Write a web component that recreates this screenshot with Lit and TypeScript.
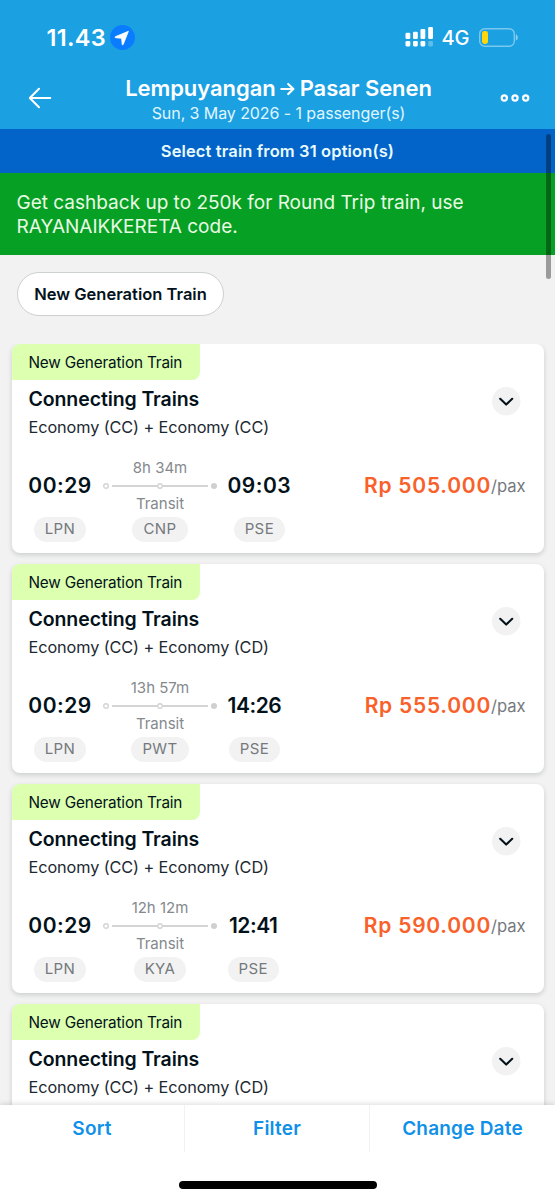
import { LitElement, html, css, nothing } from "lit";
import { customElement, property } from "lit/decorators.js";
import { classMap } from "lit/directives/class-map.js";

interface Leg {
  depart: string;
  arrive: string;
  duration: string;
  via: string;
  price: string;
}

interface Trip {
  classes: string;
  leg?: Leg;
}

const TRIPS: Trip[] = [
  { classes: "Economy (CC) + Economy (CC)", leg: { depart: "00:29", arrive: "09:03", duration: "8h 34m", via: "CNP", price: "Rp 505.000" } },
  { classes: "Economy (CC) + Economy (CD)", leg: { depart: "00:29", arrive: "14:26", duration: "13h 57m", via: "PWT", price: "Rp 555.000" } },
  { classes: "Economy (CC) + Economy (CD)", leg: { depart: "00:29", arrive: "12:41", duration: "12h 12m", via: "KYA", price: "Rp 590.000" } },
  { classes: "Economy (CC) + Economy (CD)" },
];

@customElement("train-card")
class TrainCard extends LitElement {
  @property({ attribute: false }) trip!: Trip;

  static styles = css`
    :host {
      display: block;
      box-sizing: border-box;
      height: 209px;
      border-radius: 8px;
      background: #fff;
      box-shadow: 0 2px 5px rgba(3, 18, 26, 0.16);
      color: #03121a;
    }
    .tag {
      box-sizing: border-box;
      width: 188px;
      height: 36px;
      padding-left: 17px;
      border-radius: 8px 0 8px 0;
      background: #dcffb0;
      font-size: 15.3px;
      letter-spacing: -0.16px;
      line-height: 37px;
      white-space: nowrap;
    }
    .head {
      display: flex;
      justify-content: space-between;
      align-items: flex-start;
      height: 71px;
      padding: 7px 23px 0 17px;
    }
    h2 {
      margin: 0;
      font-size: 19.5px;
      font-weight: 600;
      line-height: 25px;
      letter-spacing: -0.1px;
    }
    .classes {
      margin-top: 3px;
      font-size: 16.3px;
      line-height: 24px;
      letter-spacing: -0.1px;
      color: #1c2930;
    }
    .expand {
      width: 28.5px;
      height: 28.5px;
    }
    .trip {
      display: flex;
      align-items: flex-start;
      padding: 0 18px 0 17px;
    }
    .stop {
      display: flex;
      flex-direction: column;
      align-items: center;
      gap: 3px;
    }
    .from {
      width: 63px;
    }
    .route {
      width: 114px;
      margin: 0 10.5px 0 11.5px;
    }
    .time {
      font-size: 21px;
      font-weight: 600;
      line-height: 56px;
      letter-spacing: 0.5px;
    }
    .narrow {
      letter-spacing: -0.45px;
    }
    .leg {
      display: grid;
      grid-template-rows: 20px 16px 20px;
      justify-items: center;
      font-size: 15px;
      line-height: 20px;
      color: #84898d;
    }
    .line {
      width: 114px;
      height: 16px;
    }
    .code {
      padding: 0 11px;
      border-radius: 12.5px;
      background: #f2f2f2;
      color: #75797d;
      font-size: 15px;
      letter-spacing: 0.4px;
      line-height: 24.5px;
    }
    .price {
      margin-left: auto;
      display: flex;
      line-height: 56px;
      white-space: nowrap;
    }
    .amount {
      font-size: 21px;
      font-weight: 600;
      letter-spacing: 0.75px;
      color: #f9612b;
    }
    .pax {
      font-size: 16.6px;
      letter-spacing: -0.05px;
      color: #75797d;
    }
  `;

  private renderLeg(l: Leg) {
    return html`
      <div class="trip">
        <div class="stop from">
          <span class="time">${l.depart}</span>
          <span class="code">LPN</span>
        </div>
        <div class="stop route">
          <div class="leg">
            <span>${l.duration}</span>
            <svg class="line" viewBox="0 0 114 16" fill="none" stroke="#d3d4d5">
              <path d="M9 8H54M60 8H105" stroke-width="1.8" />
              <circle cx="3" cy="8" r="2.3" stroke-width="1.4" />
              <circle cx="57" cy="8" r="2.3" stroke-width="1.4" />
              <circle cx="111" cy="8" r="3" fill="#cfd0d1" stroke="none" />
            </svg>
            <span>Transit</span>
          </div>
          <span class="code">${l.via}</span>
        </div>
        <div class="stop">
          <span class=${classMap({ time: true, narrow: l.arrive.startsWith("1") })}>${l.arrive}</span>
          <span class="code">PSE</span>
        </div>
        <div class="price">
          <span class="amount">${l.price}</span><span class="pax">/pax</span>
        </div>
      </div>
    `;
  }

  render() {
    const t = this.trip;
    return html`
      <div class="tag">New Generation Train</div>
      <div class="head">
        <div>
          <h2>Connecting Trains</h2>
          <div class="classes">${t.classes}</div>
        </div>
        <svg class="expand" viewBox="0 0 28.5 28.5" fill="none">
          <circle cx="14.25" cy="14.25" r="14.25" fill="#f2f2f2" />
          <path d="M8.2 11.8 14.2 17.6 20.2 11.8" stroke="#03121a" stroke-width="2.1" stroke-linecap="round" stroke-linejoin="round" />
        </svg>
      </div>
      ${t.leg ? this.renderLeg(t.leg) : nothing}
    `;
  }
}

@customElement("app-root")
class AppRoot extends LitElement {
  static styles = css`
    :host {
      display: flex;
      flex-direction: column;
      position: relative;
      width: 555px;
      height: 1200px;
      overflow: hidden;
      background: #f2f2f2;
      font-family: Inter, "Liberation Sans", sans-serif;
      color: #03121a;
    }
    header {
      flex: none;
      height: 129px;
      background: #1ba0e2;
      color: #fff;
    }
    .status {
      display: flex;
      align-items: center;
      height: 75px;
      padding: 0 37px 0 46.5px;
    }
    .clock {
      font-size: 23.5px;
      font-weight: 600;
      letter-spacing: 0.3px;
    }
    .location {
      width: 25px;
      height: 25px;
      margin: 0 0 1px 4px;
    }
    .signal {
      width: 29px;
      height: 20px;
      margin: 0 0 1px auto;
    }
    .network {
      margin: 0 9.5px 0 8px;
      font-size: 20px;
      font-weight: 500;
    }
    .battery {
      width: 39px;
      height: 19px;
      margin-bottom: 1px;
    }
    .nav {
      display: flex;
      justify-content: space-between;
      align-items: flex-start;
      padding: 0 25px 0 28px;
    }
    .back {
      width: 24px;
      height: 22px;
      margin-top: 12px;
    }
    .more {
      width: 30px;
      height: 10px;
      margin-top: 17.5px;
    }
    .heading {
      margin-left: 5px;
      text-align: center;
    }
    .title {
      display: flex;
      align-items: center;
      justify-content: center;
      font-size: 22px;
      font-weight: 600;
      line-height: 26px;
      letter-spacing: -0.06px;
    }
    .arrow {
      width: 15px;
      height: 14px;
      margin: 2px 4.5px 0 4.5px;
    }
    .sub {
      margin-top: 1px;
      font-size: 16px;
      line-height: 23px;
      letter-spacing: -0.08px;
      color: #e0f6ff;
    }
    .select {
      flex: none;
      height: 44px;
      background: #0264c8;
      color: #e9fbff;
      font-size: 16.5px;
      font-weight: 600;
      letter-spacing: 0.12px;
      line-height: 44px;
      text-align: center;
    }
    .promo {
      flex: none;
      box-sizing: border-box;
      height: 82px;
      padding: 18px 16.5px;
      background: #06a024;
      color: #eafbe4;
      font-size: 19px;
      line-height: 24px;
    }
    .filters {
      flex: none;
      display: flex;
      height: 89px;
      box-sizing: border-box;
      padding: 17px;
      align-items: flex-start;
    }
    .chip {
      box-sizing: border-box;
      width: 207px;
      height: 43.5px;
      border: 1px solid #cdd0d1;
      border-radius: 22px;
      background: #fff;
      font-size: 16.5px;
      font-weight: 600;
      line-height: 42px;
      text-align: center;
    }
    .list {
      flex: 1;
      min-height: 0;
      overflow: hidden;
      display: flex;
      flex-direction: column;
      gap: 11px;
      padding: 0 11.5px;
    }
    train-card {
      flex: none;
    }
    footer {
      flex: none;
      z-index: 1;
      height: 95px;
      background: #fff;
      box-shadow: 0 -1px 5px rgba(3, 18, 26, 0.15);
    }
    .actions {
      display: grid;
      grid-template-columns: repeat(3, 1fr);
      height: 47px;
    }
    .action {
      color: #1090e8;
      font-size: 19px;
      font-weight: 600;
      letter-spacing: 0.2px;
      line-height: 47px;
      text-align: center;
    }
    .action:not(:last-child) {
      border-right: 1px solid #f1f2f3;
    }
    .home {
      width: 198px;
      height: 7.5px;
      margin: 29px auto 0;
      border-radius: 4px;
      background: #000;
    }
    .thumb {
      position: absolute;
      z-index: 2;
      top: 133.5px;
      right: 4px;
      width: 5px;
      height: 145.5px;
      border-radius: 3px;
      background: rgba(0, 0, 0, 0.36);
    }
  `;

  render() {
    return html`
      <header>
        <div class="status">
          <span class="clock">11.43</span>
          <svg class="location" viewBox="0 0 25 25">
            <circle cx="12.5" cy="12.5" r="12.5" fill="#0a7cff" />
            <path d="M18.4 6.3 5.3 11.7Q4.5 12.2 5.4 12.7L11.6 13.3 12.2 19.4Q12.6 20.4 13.2 19.5Z" fill="#fff" stroke="#fff" stroke-width=".8" stroke-linejoin="round" />
          </svg>
          <svg class="signal" viewBox="0 0 29 20" fill="#fff">
            <rect x="1.5" y="5.8" width="4.8" height="6.2" rx="1.3" />
            <rect x="9" y="4.7" width="4.8" height="7.3" rx="1.3" />
            <rect x="16.5" y="2" width="4.8" height="10" rx="1.3" />
            <rect x="24.2" y="0" width="4.8" height="12" rx="1.3" />
            <rect x="1.5" y="14" width="4.8" height="5.4" rx="1.3" />
            <rect x="9" y="14" width="4.8" height="5.4" rx="1.3" />
            <rect x="16.5" y="14" width="4.8" height="5.4" rx="1.3" />
            <rect x="24.2" y="14" width="4.8" height="5.4" rx="1.3" opacity=".3" />
          </svg>
          <span class="network">4G</span>
          <svg class="battery" viewBox="0 0 39 19">
            <rect x=".7" y=".7" width="34.6" height="17.6" rx="5" fill="none" stroke="#fff" stroke-opacity=".42" stroke-width="1.4" />
            <rect x="3" y="3" width="6" height="13" rx="2.4" fill="#ffd60a" />
            <path d="M36.8 6.3Q38.8 7.2 38.8 9.5T36.8 12.7Z" fill="#fff" fill-opacity=".5" />
          </svg>
        </div>
        <div class="nav">
          <svg class="back" viewBox="0 0 24 22" fill="none" stroke="#fff" stroke-width="2" stroke-linecap="round" stroke-linejoin="round">
            <path d="M22.3 11H2M11 1.8 1.8 11 11 20.2" />
          </svg>
          <div class="heading">
            <div class="title">
              <span>Lempuyangan</span>
              <svg class="arrow" viewBox="0 0 15 14" fill="none" stroke="#fff" stroke-width="2.2" stroke-linecap="round" stroke-linejoin="round">
                <path d="M1.3 7H13M8.2 2 13.4 7 8.2 12" />
              </svg>
              <span>Pasar Senen</span>
            </div>
            <div class="sub">Sun, 3 May 2026 - 1 passenger(s)</div>
          </div>
          <svg class="more" viewBox="0 0 30 10" fill="none" stroke="#fff" stroke-width="2.2">
            <circle cx="4.3" cy="5" r="2.6" />
            <circle cx="15" cy="5" r="2.6" />
            <circle cx="25.7" cy="5" r="2.6" />
          </svg>
        </div>
      </header>
      <div class="select">Select train from 31 option(s)</div>
      <div class="promo">
        <div>Get cashback up to 250k for Round Trip train, use</div>
        <div>RAYANAIKKERETA code.</div>
      </div>
      <div class="filters"><div class="chip">New Generation Train</div></div>
      <div class="list">${TRIPS.map((t) => html`<train-card .trip=${t}></train-card>`)}</div>
      <footer>
        <div class="actions">
          <div class="action">Sort</div>
          <div class="action">Filter</div>
          <div class="action">Change Date</div>
        </div>
        <div class="home"></div>
      </footer>
      <div class="thumb"></div>
    `;
  }
}
